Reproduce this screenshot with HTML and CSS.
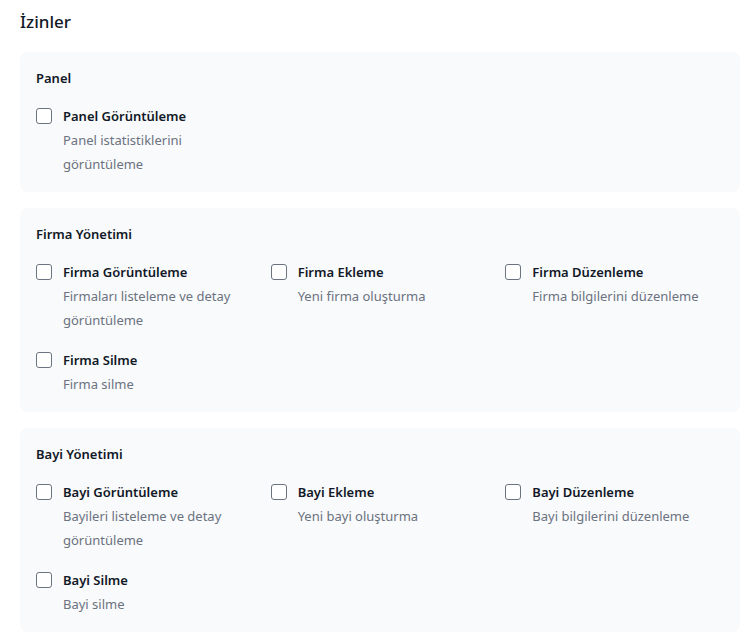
FILE: index.html
```html
<!DOCTYPE html>
<html lang="tr">
<head>
<meta charset="utf-8">
<link rel="stylesheet" href="styles.css">
</head>
<body>
<div class="page">
  <h2 class="title">İzinler</h2>

  <section class="card">
    <h3 class="card-title">Panel</h3>
    <div class="grid">
      <label class="perm">
        <span class="box"></span>
        <span class="text"><span class="name">Panel Görüntüleme</span><span class="desc">Panel istatistiklerini görüntüleme</span></span>
      </label>
    </div>
  </section>

  <section class="card">
    <h3 class="card-title">Firma Yönetimi</h3>
    <div class="grid">
      <label class="perm">
        <span class="box"></span>
        <span class="text"><span class="name">Firma Görüntüleme</span><span class="desc">Firmaları listeleme ve detay görüntüleme</span></span>
      </label>
      <label class="perm">
        <span class="box"></span>
        <span class="text"><span class="name">Firma Ekleme</span><span class="desc">Yeni firma oluşturma</span></span>
      </label>
      <label class="perm">
        <span class="box"></span>
        <span class="text"><span class="name">Firma Düzenleme</span><span class="desc">Firma bilgilerini düzenleme</span></span>
      </label>
      <label class="perm">
        <span class="box"></span>
        <span class="text"><span class="name">Firma Silme</span><span class="desc">Firma silme</span></span>
      </label>
    </div>
  </section>

  <section class="card">
    <h3 class="card-title">Bayi Yönetimi</h3>
    <div class="grid">
      <label class="perm">
        <span class="box"></span>
        <span class="text"><span class="name">Bayi Görüntüleme</span><span class="desc">Bayileri listeleme ve detay görüntüleme</span></span>
      </label>
      <label class="perm">
        <span class="box"></span>
        <span class="text"><span class="name">Bayi Ekleme</span><span class="desc">Yeni bayi oluşturma</span></span>
      </label>
      <label class="perm">
        <span class="box"></span>
        <span class="text"><span class="name">Bayi Düzenleme</span><span class="desc">Bayi bilgilerini düzenleme</span></span>
      </label>
      <label class="perm">
        <span class="box"></span>
        <span class="text"><span class="name">Bayi Silme</span><span class="desc">Bayi silme</span></span>
      </label>
    </div>
  </section>
</div>
</body>
</html>
```

FILE: styles.css
```css
* { box-sizing: border-box; }
html, body { margin: 0; padding: 0; background: #ffffff; }
body {
  font-family: "Noto Sans", "Open Sans", sans-serif;
  color: #111827;
}
.page {
  width: 720px;
  margin-left: 20px;
  padding-top: 8px;
}
.title {
  margin: 0 0 16px 0;
  font-size: 17px;
  line-height: 28px;
  font-weight: 500;
}
.card {
  background: #f9fafb;
  border-radius: 8px;
  padding: 16px;
  margin-bottom: 16px;
}
.card-title {
  margin: 0 0 16px 0;
  font-size: 13px;
  line-height: 20px;
  font-weight: 600;
}
.grid {
  display: grid;
  grid-template-columns: repeat(3, 1fr);
  column-gap: 16px;
  row-gap: 16px;
}
.perm {
  display: flex;
  align-items: flex-start;
  gap: 11px;
}
.box {
  flex: none;
  width: 16px;
  height: 16px;
  margin-top: 4px;
  border: 1px solid #6b7280;
  border-radius: 3px;
  background: #ffffff;
}
.text {
  display: flex;
  flex-direction: column;
  font-size: 13px;
  line-height: 24px;
}
.name {
  font-weight: 600;
  color: #111827;
}
.desc {
  color: #6b7280;
}
```
